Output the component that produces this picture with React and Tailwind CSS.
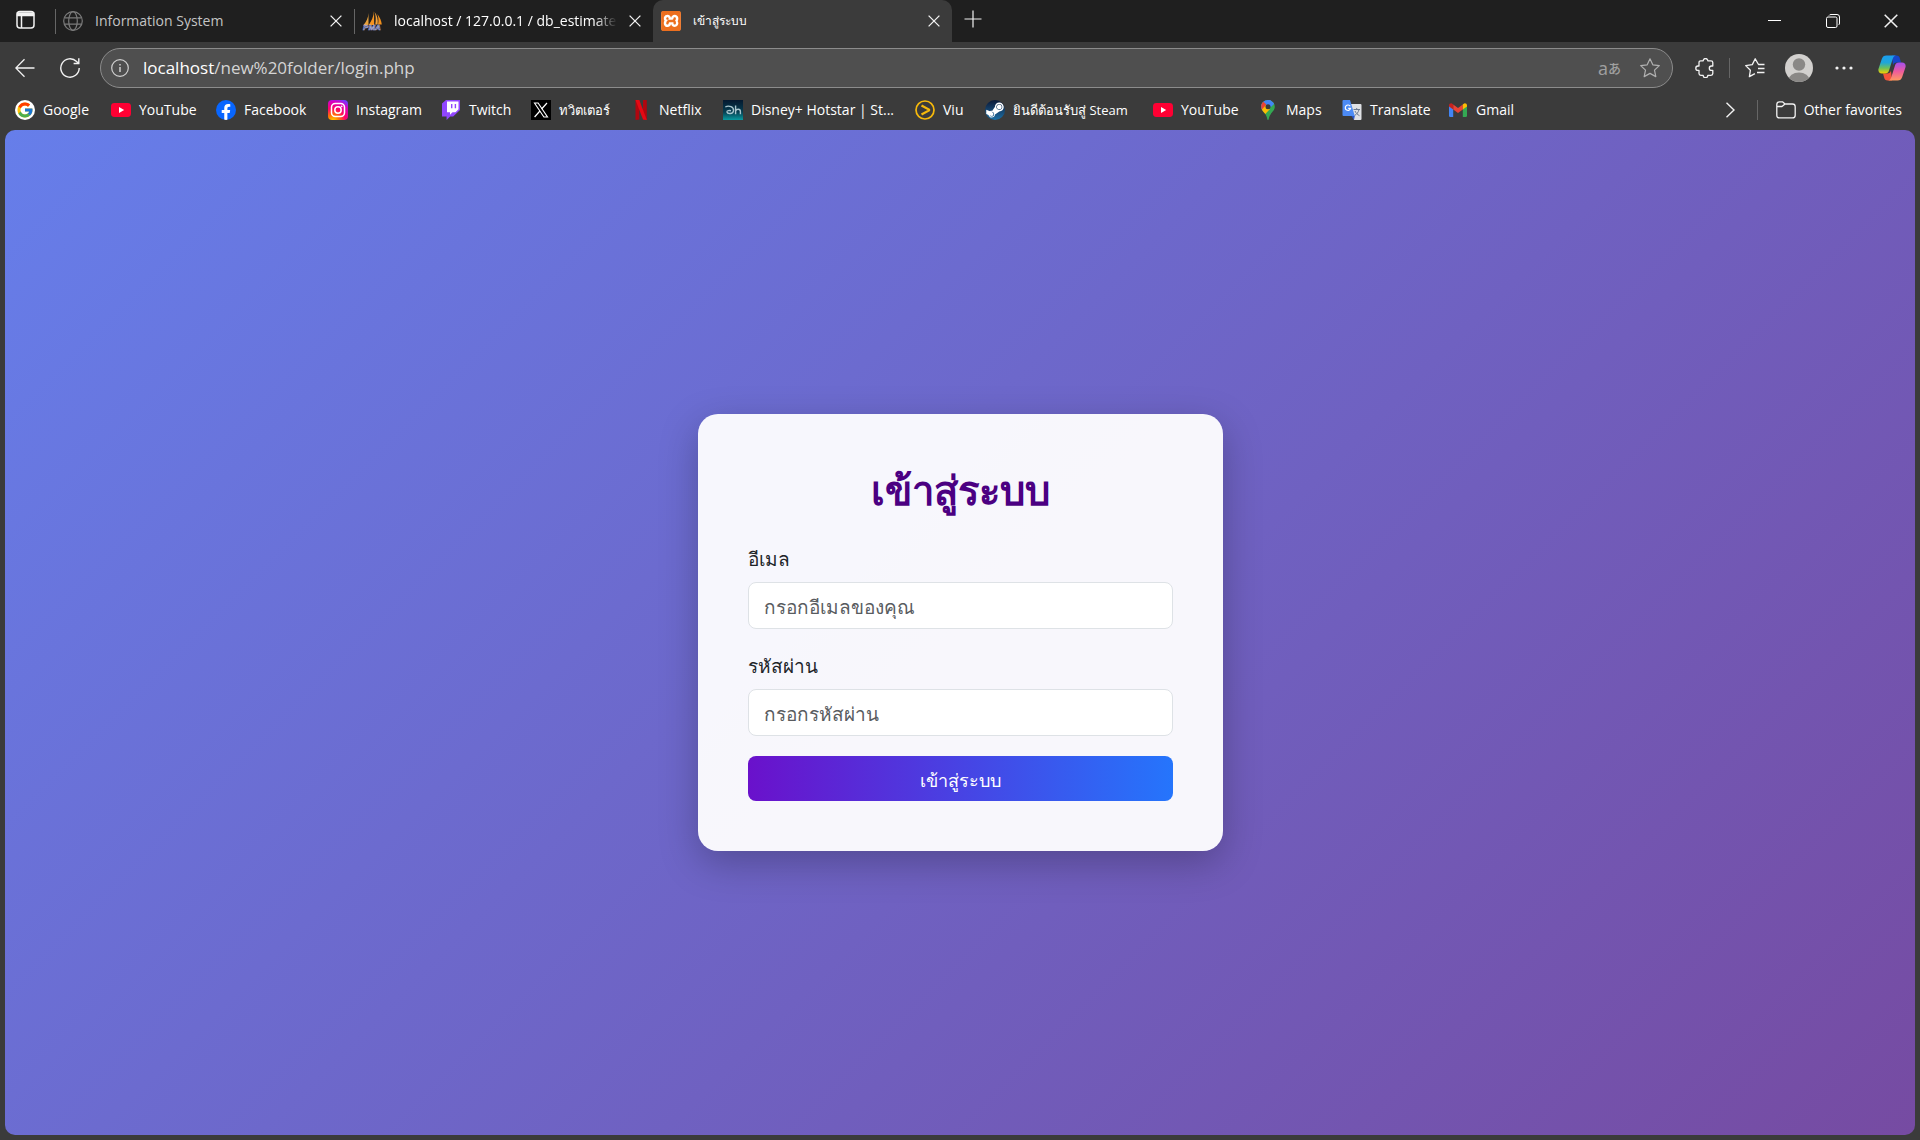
import React from "react";
import { FcGoogle } from "react-icons/fc";
import { FaSteamSymbol, FaFacebookF } from "react-icons/fa";
import { SiXampp } from "react-icons/si";

const ui = "font-['Open_Sans','Noto_Sans',sans-serif]";

function Globe() {
  return (
    <svg viewBox="0 0 20 20" className="size-5 shrink-0" fill="none" stroke="#7b7b7b" strokeWidth="1.2" aria-hidden="true">
      <circle cx="10" cy="10" r="9.3" />
      <ellipse cx="10" cy="10" rx="4.3" ry="9.3" />
      <path d="M1.4 6.8h17.2M1.4 13.2h17.2" />
    </svg>
  );
}

function Sails() {
  return (
    <svg viewBox="0 0 20 20" className="size-5 shrink-0 overflow-visible" aria-hidden="true">
      <path d="M6.500 2C6.300 7 4.300 11 1 14.500L6.500 14Z" fill="#e8a13c" />
      <path d="M12 0C11.800 5 9.500 10 6.800 14L12.200 14Z" fill="#f7931e" />
      <path d="M12.600 1C14 5 14 9 13.300 13.500L15.600 13.500C16.300 8.500 15 4 12.600 1Z" fill="#f5a33a" />
      <path d="M15.400 3C18 6.500 19.500 10 19.800 13.500L16 13.500C16.800 10 16.600 6.500 15.400 3Z" fill="#f08f1c" />
      <text x="10" y="19" textAnchor="middle" fontSize="8" fontWeight="700" fontStyle="italic" fontFamily="Liberation Sans, sans-serif" fill="#3c3f7a" stroke="#b9bbe0" strokeWidth="0.500">PMA</text>
    </svg>
  );
}

function Xampp() {
  return (
    <span className="flex size-5 items-center justify-center rounded-sm bg-white">
      <SiXampp className="size-5 text-[#ec6f1f]" />
    </span>
  );
}

function Cross({ className = "size-3" }) {
  return (
    <svg viewBox="0 0 12 12" className={className} fill="none" stroke="#f2f2f2" strokeWidth="1.300" aria-hidden="true">
      <path d="M.6.6l10.800 10.800M11.400.6L.6 11.400" />
    </svg>
  );
}

function YouTube() {
  return (
    <svg viewBox="0 0 20 20" className="size-5" aria-hidden="true">
      <rect y="3" width="20" height="14" rx="3.400" fill="#f03" />
      <path d="M8 7v6l5.200-3z" fill="#fff" />
    </svg>
  );
}

function Google() {
  return (
    <span className="flex size-5 items-center justify-center rounded-full bg-white">
      <FcGoogle className="size-[18px]" />
    </span>
  );
}

function Facebook() {
  return (
    <span className="flex size-5 items-end justify-center overflow-hidden rounded-full bg-[#0866ff]">
      <FaFacebookF className="h-4 w-4 text-white" />
    </span>
  );
}

function Instagram() {
  return (
    <svg viewBox="0 0 20 20" className="size-5" aria-hidden="true">
      <defs>
        <radialGradient id="ig" cx="0.250" cy="1.050" r="1.150">
          <stop offset="0" stopColor="#ffd600" />
          <stop offset="0.250" stopColor="#ff7a00" />
          <stop offset="0.550" stopColor="#ff0169" />
          <stop offset="0.850" stopColor="#d300c5" />
          <stop offset="1" stopColor="#7638fa" />
        </radialGradient>
      </defs>
      <rect width="20" height="20" rx="4" fill="url(#ig)" />
      <rect x="3.500" y="3.500" width="13" height="13" rx="3.800" fill="none" stroke="#fff" strokeWidth="1.500" />
      <circle cx="10" cy="10" r="3.200" fill="none" stroke="#fff" strokeWidth="1.500" />
      <circle cx="13.700" cy="6.300" r="0.900" fill="#fff" />
    </svg>
  );
}

function Twitch() {
  return (
    <svg viewBox="0 0 20 20" className="size-5" aria-hidden="true">
      <path d="M5 0L1 3.600v12.800h4.600V20l3.600-3.600h3L19 10V0z" fill="#9146ff" />
      <path d="M17.500 9.300l-3 2.900h-3L9 14.700v-2.500H6V1.400h11.500z" fill="#fff" />
      <path d="M10 4h1.400v4.300H10zM13.700 4h1.400v4.300h-1.400z" fill="#9146ff" />
    </svg>
  );
}

function XLogo() {
  return (
    <svg viewBox="0 0 20 20" className="size-5" aria-hidden="true">
      <rect width="20" height="20" fill="#000" />
      <path d="M3.500 3h3.600l9.400 14h-3.600z" fill="none" stroke="#fff" strokeWidth="1.100" />
      <path d="M16 3l-5.400 6M8.900 11L3.600 17" stroke="#fff" strokeWidth="1.200" />
    </svg>
  );
}

function Netflix() {
  return (
    <svg viewBox="0 0 20 20" className="size-5" aria-hidden="true">
      <path d="M4.500 0H8.300v19.600L4.500 20zM12 0h3.800v20l-3.800-.4z" fill="#b1060f" />
      <path d="M4.500 0H8.300l7.500 20-3.800-.4z" fill="#e50914" />
    </svg>
  );
}

function Hotstar() {
  return (
    <svg viewBox="0 0 20 20" className="size-5" aria-hidden="true">
      <defs>
        <linearGradient id="hs" x1="0" y1="0" x2="0" y2="1">
          <stop offset="0" stopColor="#04182f" />
          <stop offset="0.600" stopColor="#063f52" />
          <stop offset="1" stopColor="#0a9ba0" />
        </linearGradient>
      </defs>
      <rect width="20" height="20" fill="url(#hs)" />
      <path d="M2.300 7C6 5 11 7 10.500 10.800C10 14.200 4.500 14.200 4 12c-.3-1.500 2.500-1.700 4-1.300M12.600 5.500v8.700M12.600 11c.8-2.300 4.800-2.600 4.800.4v2.800" fill="none" stroke="#a9c6ce" strokeWidth="1.400" />
    </svg>
  );
}

function Viu() {
  return (
    <svg viewBox="0 0 20 20" className="size-5" fill="none" stroke="#f6b90b" aria-hidden="true">
      <circle cx="10" cy="10" r="9" strokeWidth="1.700" />
      <path d="M6.500 5.500L14 9.600v.8l-7.500 4.100" strokeWidth="2.300" />
    </svg>
  );
}

function Steam() {
  return (
    <span className="flex size-5 items-center justify-center overflow-hidden rounded-full bg-linear-to-b from-[#0b1a38] to-[#1a6fa5]">
      <FaSteamSymbol className="size-5 text-white" />
    </span>
  );
}

function Maps() {
  return (
    <svg viewBox="0 0 20 20" className="size-5" aria-hidden="true">
      <defs>
        <clipPath id="pin"><path d="M10 0C6 0 3.200 3 3.200 6.700C3.200 11.500 8.700 13 9.300 19.300C9.400 20.200 10.600 20.200 10.700 19.300C11.300 13 16.800 11.500 16.800 6.700C16.800 3 14 0 10 0Z" /></clipPath>
      </defs>
      <g clipPath="url(#pin)">
        <rect width="20" height="20" fill="#34a853" />
        <path d="M2 13L10.500 4 18-3H2z" fill="#4285f4" />
        <path d="M2 2l3-.5 4 3.500-6 7z" fill="#ea4335" />
        <path d="M2 11.500L8 5l4 4-7.500 8z" fill="#fbbc04" />
        <path d="M10-1l-2 6 5 2 4-4z" fill="#4285f4" />
      </g>
      <circle cx="10" cy="6.800" r="2.500" fill="#3b3b3b" />
    </svg>
  );
}

function Translate() {
  return (
    <svg viewBox="0 0 20 20" className="size-5" aria-hidden="true">
      <path d="M8 4h10.500a1 1 0 0 1 1 1v14a1 1 0 0 1-1 1H12z" fill="#dfe1e5" />
      <path d="M11.500 9.500h6.500M14.700 8v1.500M17 9.500c-.6 3-2.500 5-4.500 6M13 11c.8 2 2.600 3.600 4.500 4.700" fill="none" stroke="#6b7a90" strokeWidth="1" />
      <path d="M1.500 0H8l4.800 16H1.500a1 1 0 0 1-1-1V1a1 1 0 0 1 1-1z" fill="#4c8bf5" />
      <path d="M8.300 6.300A2.700 2.700 0 1 0 8.600 8.400H6.200" fill="none" stroke="#fff" strokeWidth="1.200" />
      <path d="M9.500 16h3.300L12 20z" fill="#2a56c6" />
    </svg>
  );
}

function Gmail() {
  return (
    <svg viewBox="0 0 20 20" className="size-5" aria-hidden="true">
      <path d="M1 5.500l4.200 3V17H2.300A1.300 1.300 0 0 1 1 15.700z" fill="#4285f4" />
      <path d="M19 5.500l-4.200 3V17h2.900a1.300 1.300 0 0 0 1.300-1.300z" fill="#34a853" />
      <path d="M5.200 4.500L10 8.100l4.800-3.600v5L10 13.100 5.200 9.500z" fill="#ea4335" />
      <path d="M1 5.500C1 3.400 3.300 2.600 4.600 3.900l.6.500v5.100L1 6.400z" fill="#c5221f" />
      <path d="M19 5.500c0-2.100-2.300-2.900-3.600-1.600l-.6.500v5.100L19 6.400z" fill="#fbbc04" />
    </svg>
  );
}

const bookmarks = [
  { label: "Google", Icon: Google, width: "w-[96px]" },
  { label: "YouTube", Icon: YouTube, width: "w-[105px]" },
  { label: "Facebook", Icon: Facebook, width: "w-[112px]" },
  { label: "Instagram", Icon: Instagram, width: "w-[113px]" },
  { label: "Twitch", Icon: Twitch, width: "w-[90px]" },
  { label: "ทวิตเตอร์", Icon: XLogo, width: "w-[100px]", thai: true },
  { label: "Netflix", Icon: Netflix, width: "w-[92px]" },
  { label: "Disney+ Hotstar | St...", Icon: Hotstar, width: "w-[192px]" },
  { label: "Viu", Icon: Viu, width: "w-[70px]" },
  { label: "ยินดีต้อนรับสู่ Steam", Icon: Steam, width: "w-[168px]", thai: true },
  { label: "YouTube", Icon: YouTube, width: "w-[105px]" },
  { label: "Maps", Icon: Maps, width: "w-[84px]" },
  { label: "Translate", Icon: Translate, width: "w-[106px]" },
  { label: "Gmail", Icon: Gmail, width: "w-[86px]" },
];

function Tab({ icon, title, active, dim, divider, thai }) {
  return (
    <div className={`relative flex h-full w-[299px] items-center pl-2 pr-3 ${active ? "rounded-t-[10px] bg-[#3b3b3b]" : ""}`}>
      {divider && <span className="absolute left-0 top-[9px] h-[25px] w-px bg-[#666]" />}
      <span className="mr-3 flex shrink-0">{icon}</span>
      <span className={`min-w-0 flex-1 overflow-hidden whitespace-nowrap leading-5 ${thai ? "text-xs font-medium" : "text-sm"} ${dim ? "text-[#c4c4c4]" : "text-white"} ${divider && !dim ? "mask-r-from-90%" : ""}`}>{title}</span>
      <button aria-label="Close tab" className="ml-3"><Cross /></button>
    </div>
  );
}

function TabBar() {
  return (
    <div className="flex h-[42px] bg-[#1f1f1f] pl-4">
      <button aria-label="Tab actions" className="mr-[19px] pb-0.5">
        <svg viewBox="0 0 20 20" className="size-5" fill="none" stroke="#f2f2f2" strokeWidth="1.500" aria-hidden="true">
          <rect x="1" y="1.500" width="17" height="16.500" rx="3" />
          <path d="M1.500 3h16v2.500h-16z" fill="#f2f2f2" />
          <path d="M5.500 6v12" />
        </svg>
      </button>
      <Tab divider dim icon={<Globe />} title="Information System" />
      <Tab divider icon={<Sails />} title="localhost / 127.0.0.1 / db_estimate" />
      <Tab active thai icon={<Xampp />} title="เข้าสู่ระบบ" />
      <button aria-label="New tab" className="ml-1 px-2 pb-1">
        <svg viewBox="0 0 18 18" className="size-[18px]" stroke="#f2f2f2" strokeWidth="1.200" aria-hidden="true"><path d="M9 .5v17M.5 9h17" /></svg>
      </button>
      <div className="ml-auto flex h-full">
        <button aria-label="Minimize" className="flex w-[58px] items-center justify-center">
          <svg viewBox="0 0 14 14" className="size-3.5" stroke="#fff" aria-hidden="true"><path d="M0 6.500h13" /></svg>
        </button>
        <button aria-label="Restore" className="flex w-[58px] items-center justify-center">
          <svg viewBox="0 0 14 14" className="size-3.5" fill="none" stroke="#fff" aria-hidden="true">
            <rect x="0.500" y="3" width="10.500" height="10.500" rx="1.500" />
            <path d="M3 1.500Q3.500.5 5 .5h6q2.500 0 2.500 2.500v6q0 1.500-1 2" />
          </svg>
        </button>
        <button aria-label="Close window" className="flex w-[58px] items-center justify-center"><Cross className="size-3.5" /></button>
      </div>
    </div>
  );
}

function Copilot() {
  return (
    <svg viewBox="0 0 28 28" className="size-7" aria-hidden="true">
      <defs>
        <linearGradient id="cp1" x1="0" y1="0" x2="0" y2="1"><stop offset="0" stopColor="#1b9df0" /><stop offset="0.400" stopColor="#1fa6d8" /><stop offset="0.700" stopColor="#6cc05a" /><stop offset="1" stopColor="#f5d000" /></linearGradient>
        <linearGradient id="cp2" x1="0" y1="0" x2="0" y2="1"><stop offset="0" stopColor="#a34ff0" /><stop offset="0.500" stopColor="#ee5b9c" /><stop offset="1" stopColor="#ff9a60" /></linearGradient>
      </defs>
      <path d="M14 1.500h4.500c2 0 2.800 1 3.300 2.800L23 8.500h-4c-2.500 0-3.500 1-4 3z" fill="#1746c9" />
      <path d="M14 26.500H9.500c-2 0-2.800-1-3.300-2.800L5 19.500h4c2.500 0 3.500-1 4-3z" fill="#f4533a" />
      <path d="M8.500 1.500H18c-2.200.3-2.800 1.800-3.500 4L11 16.500c-.8 2.200-1.600 3-4 3H4c-3 0-4.200-2.200-3.400-5L3.800 5C4.600 2.600 6 1.500 8.500 1.500z" fill="url(#cp1)" />
      <path d="M19.500 26.500H10c2.200-.3 2.800-1.800 3.500-4L17 11.500c.8-2.200 1.600-3 4-3h3c3 0 4.200 2.200 3.400 5L24.200 23c-.8 2.400-2.200 3.500-4.700 3.500z" fill="url(#cp2)" />
    </svg>
  );
}

function Toolbar() {
  return (
    <div className="flex h-[52px] items-center pl-[15px] pr-[14px]">
      <button aria-label="Back" className="mr-[25px]">
        <svg viewBox="0 0 20 20" className="size-5" fill="none" stroke="#f2f2f2" strokeWidth="1.300" aria-hidden="true"><path d="M19.500 10H.8M9.500 1.300L.8 10l8.700 8.700" /></svg>
      </button>
      <button aria-label="Refresh" className="mr-5">
        <svg viewBox="0 0 20 20" className="size-5" fill="none" stroke="#f2f2f2" strokeWidth="1.400" aria-hidden="true"><path d="M19.200 10a9.200 9.200 0 1 1-2.600-6.400L18.800 5.500M18.800.3v5.200h-5.200" /></svg>
      </button>
      <div className="flex h-10 min-w-0 flex-1 items-center rounded-full border border-[#8c8c8c] bg-[#4f4f4f] pr-3">
        <svg viewBox="0 0 18 18" className="ml-2.5 mr-3.5 size-[18px] shrink-0" fill="none" stroke="#d0d0d0" strokeWidth="1.200" aria-hidden="true">
          <circle cx="9" cy="9" r="8.300" /><path d="M9 8v5M9 5v1.500" strokeWidth="1.500" />
        </svg>
        <p className="flex-1 whitespace-nowrap text-[17px] text-[#d4d4d4]"><span className="text-white">localhost</span>/new%20folder/login.php</p>
        <button aria-label="Translate page" className="mr-[19px] flex items-center text-[#a0a0a0]">
          <span className="text-lg leading-5">a</span><span className="font-['Noto_Sans_CJK_JP',sans-serif] text-[13px] font-medium leading-5">あ</span>
        </button>
        <button aria-label="Add to favorites">
          <svg viewBox="0 0 20 20" className="size-5" fill="none" stroke="#b0b0b0" strokeWidth="1.200" strokeLinejoin="round" aria-hidden="true"><path d="M10 .8l2.800 6 6.500.8-4.800 4.500 1.300 6.500L10 15.400l-5.800 3.200 1.300-6.500L.7 7.600l6.500-.8z" /></svg>
        </button>
      </div>
      <button aria-label="Extensions" className="ml-[22px]">
        <svg viewBox="0 0 20 20" className="size-5" fill="none" stroke="#f2f2f2" strokeWidth="1.300" strokeLinejoin="round" aria-hidden="true"><path d="M8.200 2.800a2.300 2.300 0 0 1 4.600 0H16q1.800 0 1.800 1.800V8H16.500a2.200 2.200 0 0 0 0 4.400h1.300v3.200q0 1.800-1.800 1.800H12.800a2.300 2.300 0 0 1-4.600 0H5.800q-1.800 0-1.800-1.800V12.400H3A2.200 2.200 0 0 1 3 8H4V4.600Q4 2.800 5.800 2.800z" /></svg>
      </button>
      <span className="ml-[14px] h-5 w-px bg-[#666]" />
      <button aria-label="Favorites" className="ml-[15px]">
        <svg viewBox="0 0 20 20" className="size-5" fill="none" stroke="#f2f2f2" strokeWidth="1.300" strokeLinejoin="round" aria-hidden="true"><path d="M19.500 6.500h-6L10.200.8 7.300 6.600.7 7.600l4.700 4.600-1 6.400 5.500-3M13 10.500h6.500M12 14.500h7.500" /></svg>
      </button>
      <button aria-label="Profile" className="ml-5">
        <svg viewBox="0 0 28 28" className="size-7" aria-hidden="true">
          <clipPath id="avatar"><circle cx="14" cy="14" r="14" /></clipPath>
          <g clipPath="url(#avatar)"><rect width="28" height="28" fill="#d2d0ce" /><circle cx="14" cy="10.500" r="6.200" fill="#8a8886" /><ellipse cx="14" cy="26" rx="10.500" ry="7.500" fill="#8a8886" /></g>
        </svg>
      </button>
      <button aria-label="Settings and more" className="ml-[22px]">
        <svg viewBox="0 0 18 18" className="size-[18px]" fill="#f2f2f2" aria-hidden="true"><circle cx="2" cy="9" r="1.600" /><circle cx="9" cy="9" r="1.600" /><circle cx="16" cy="9" r="1.600" /></svg>
      </button>
      <button aria-label="Copilot" className="ml-[25px]"><Copilot /></button>
    </div>
  );
}

function BookmarksBar() {
  return (
    <nav aria-label="Favorites bar" className="flex h-9 items-center pb-1 pl-[15px] pr-[18px] text-sm text-white">
      {bookmarks.map(({ label, Icon, width, thai }, i) => (
        <a key={i} href="#" className={`flex shrink-0 items-center gap-2 whitespace-nowrap ${width} ${thai ? "text-[13px]" : ""}`}>
          <span className="shrink-0"><Icon /></span>{label}
        </a>
      ))}
      <button aria-label="More favorites" className="ml-auto">
        <svg viewBox="0 0 16 16" className="size-4" fill="none" stroke="#f2f2f2" strokeWidth="1.400" aria-hidden="true"><path d="M4.500.8L12 8l-7.500 7.200" /></svg>
      </button>
      <span className="ml-[19px] h-5 w-px bg-[#666]" />
      <button className="ml-[18px] flex items-center gap-2 whitespace-nowrap">
        <svg viewBox="0 0 20 20" className="size-5" fill="none" stroke="#f2f2f2" strokeWidth="1.300" strokeLinejoin="round" aria-hidden="true"><path d="M.8 4.500Q.8 1.800 3.500 1.800h3L9 4h7.500q2.700 0 2.700 2.700v8.500q0 2.700-2.700 2.700h-13Q.8 17.900.8 15.200zM.8 6.500H6L9 4" /></svg>
        Other favorites
      </button>
    </nav>
  );
}

function Field({ id, label, type, placeholder }) {
  return (
    <div className="mb-5">
      <label htmlFor={id} className="mb-2 block pt-0.5 leading-[30px] text-[#212529]">{label}</label>
      <input id={id} type={type} placeholder={placeholder} className="block h-[47px] w-full rounded-lg border border-[#dee2e6] bg-white px-[15px] pt-0.5 text-[#212529] placeholder:text-[#595c5f]" />
    </div>
  );
}

export default function App() {
  return (
    <div className={`flex min-h-screen flex-col bg-[#3b3b3b] ${ui}`}>
      <header>
        <TabBar />
        <Toolbar />
        <BookmarksBar />
      </header>
      <main className="mx-[5px] mb-[5px] flex flex-1 items-center justify-center rounded-[10px] bg-[linear-gradient(135deg,#667eea,#764ba2)]">
        <form className="w-full max-w-[525px] rounded-[20px] bg-white/95 p-[50px] text-[19px] shadow-[0_12px_38px_rgba(0,0,0,0.25)]">
          <h1 className="mb-7 pt-0.5 text-center text-[40px] font-bold leading-[48px] text-[#4b0082]">เข้าสู่ระบบ</h1>
          <Field id="email" label="อีเมล" type="email" placeholder="กรอกอีเมลของคุณ" />
          <Field id="password" label="รหัสผ่าน" type="password" placeholder="กรอกรหัสผ่าน" />
          <button type="submit" className="block h-[45px] w-full rounded-lg bg-[linear-gradient(90deg,#6a11cb,#2575fc)] pt-0.5 text-lg font-medium text-white">เข้าสู่ระบบ</button>
        </form>
      </main>
    </div>
  );
}
